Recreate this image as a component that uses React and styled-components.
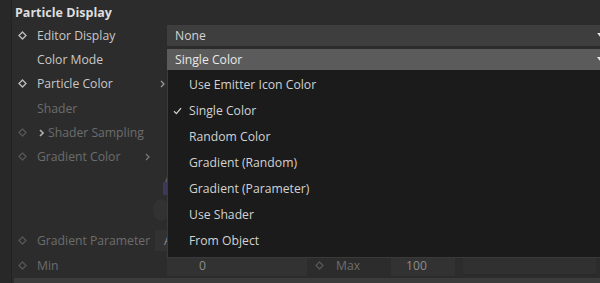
import React from "react";
import styled, { createGlobalStyle } from "styled-components";

const GlobalStyle = createGlobalStyle`
  html, body {
    margin: 0;
    padding: 0;
    background: #2c2c2c;
    overflow: hidden;
  }
  body {
    font-family: "Open Sans", "Noto Sans", sans-serif;
    font-size: 12.2px;
    -webkit-font-smoothing: antialiased;
  }
`;

const Page = styled.div`
  display: flex;
  width: 600px;
  height: 283px;
  overflow: hidden;
`;

const Gutter = styled.div`
  width: 11px;
  flex-shrink: 0;
  background: #282828;
  border-right: 1px solid #222222;
`;

const Panel = styled.div`
  flex: 1;
  display: flex;
  flex-direction: column;
  background: #2c2c2c;
  min-width: 0;
`;

const Heading = styled.div`
  height: 20px;
  padding: 3px 0 0 3px;
  line-height: 20px;
  font-size: 12.5px;
  font-weight: 700;
  color: #dedede;
`;

const Row = styled.div`
  height: 24.4px;
  display: grid;
  grid-template-columns: 20px 135px 1fr;
  align-items: center;
  position: relative;
  z-index: ${(p) => (p.$top ? 5 : "auto")};
`;

const KeyCell = styled.div`
  display: flex;
  justify-content: center;
  align-items: center;
`;

const Label = styled.div`
  display: flex;
  align-items: center;
  padding-left: 5px;
  color: ${(p) => (p.$dim ? "#6c6c6c" : "#c8c8c8")};
  white-space: nowrap;
`;

const Chevron = styled.span`
  margin-left: auto;
  margin-right: ${(p) => p.$right || 2}px;
  display: flex;
  color: ${(p) => p.$color || "#9a9a9a"};
`;

const LeadChevron = styled.span`
  display: flex;
  margin: 0 4px 0 2px;
  color: #b0b0b0;
`;

const Field = styled.div`
  position: relative;
  height: 21px;
  line-height: 21px;
  padding-left: 8px;
  background: ${(p) => (p.$active ? "#5b5b5b" : "#3e3e3e")};
  color: ${(p) => (p.$active ? "#e8e8e8" : "#d4d4d4")};
  white-space: nowrap;
`;

const FieldArrow = styled.span`
  position: absolute;
  right: 0;
  top: 8px;
  width: 3px;
  height: 4px;
  background: #e8e8e8;
  clip-path: polygon(0 0, 100% 0, 100% 100%);
`;

const GradientArea = styled.div`
  height: 59.6px;
  display: flex;
  padding-left: 141px;
`;

const GradientStack = styled.div`
  display: flex;
  flex-direction: column;
  align-items: flex-end;
  width: 16px;
`;

const Knot = styled.div`
  width: 0;
  height: 0;
  margin-top: 2px;
  border-left: 4px solid transparent;
  border-bottom: 11px solid #5a5a5a;
`;

const Swatch = styled.div`
  width: 6px;
  height: 13px;
  background: #3b3858;
`;

const Dial = styled.div`
  width: 16px;
  height: 22px;
  margin-top: 4px;
  border-radius: 50%;
  background: #323232;
`;

const ParamRow = styled.div`
  height: 24.4px;
  display: grid;
  grid-template-columns: 20px 135px 140px 24px 60px 1fr;
  align-items: center;
`;

const ValueBox = styled.div`
  height: 21px;
  line-height: 21px;
  background: #323232;
  color: #8c8c8c;
  padding-left: ${(p) => p.$pad || 8}px;
  margin-left: ${(p) => p.$offset || 0}px;
  white-space: nowrap;
`;

const MaxGroup = styled.div`
  display: grid;
  grid-template-columns: 64px 1fr;
  align-items: center;
`;

const Slider = styled.div`
  height: 21px;
  margin-left: 8px;
  margin-right: 4px;
  background: #303030;
  border-bottom: 2px solid #2a2a2a;
  box-sizing: border-box;
`;

const BottomBand = styled.div`
  height: 5px;
  margin-top: 0.6px;
  margin-left: 2px;
  background: #3b3b3b;
`;

const Menu = styled.div`
  position: absolute;
  left: 0;
  top: 100%;
  width: 440px;
  padding: 2px 0 3px;
  background: #1b1b1b;
  border-left: 1px solid #3a3a3a;
  border-bottom: 1px solid #3a3a3a;
`;

const MenuItem = styled.div`
  height: 26px;
  line-height: 26px;
  padding-left: 21px;
  position: relative;
  color: #d2d2d2;
  white-space: nowrap;
`;

const Check = styled.svg`
  position: absolute;
  left: 5px;
  top: 9px;
`;

const Diamond = ({ dim }) => (
  <svg width="9" height="9" viewBox="0 0 9 9">
    <path
      d="M4.5 1 L8 4.5 L4.5 8 L1 4.5 Z"
      fill="none"
      stroke={dim ? "#555555" : "#bdbdbd"}
      strokeWidth="1.3"
    />
  </svg>
);

const ChevronIcon = ({ width = 1.3 }) => (
  <svg width="5" height="8" viewBox="0 0 5 8">
    <path d="M1 1 L4 4 L1 7" fill="none" stroke="currentColor" strokeWidth={width} />
  </svg>
);

const modes = [
  "Use Emitter Icon Color",
  "Single Color",
  "Random Color",
  "Gradient (Random)",
  "Gradient (Parameter)",
  "Use Shader",
  "From Object",
];

export default function App() {
  return (
    <>
      <GlobalStyle />
      <Page>
        <Gutter />
        <Panel>
          <Heading>Particle Display</Heading>

          <Row>
            <KeyCell><Diamond /></KeyCell>
            <Label>Editor Display</Label>
            <Field>
              None
              <FieldArrow />
            </Field>
          </Row>

          <Row $top>
            <KeyCell />
            <Label>Color Mode</Label>
            <Field $active>
              Single Color
              <FieldArrow />
              <Menu>
                {modes.map((m) => (
                  <MenuItem key={m}>
                    {m === "Single Color" && (
                      <Check width="9" height="8" viewBox="0 0 9 8">
                        <path d="M1 4.2 L3.4 6.6 L8 1.2" fill="none" stroke="#d2d2d2" strokeWidth="1.3" />
                      </Check>
                    )}
                    {m}
                  </MenuItem>
                ))}
              </Menu>
            </Field>
          </Row>

          <Row>
            <KeyCell><Diamond /></KeyCell>
            <Label>
              Particle Color
              <Chevron $right={2}><ChevronIcon /></Chevron>
            </Label>
            <div />
          </Row>

          <Row>
            <KeyCell />
            <Label $dim>Shader</Label>
            <div />
          </Row>

          <Row>
            <KeyCell><Diamond dim /></KeyCell>
            <Label $dim>
              <LeadChevron><ChevronIcon width={1.6} /></LeadChevron>
              Shader Sampling
            </Label>
            <div />
          </Row>

          <Row>
            <KeyCell><Diamond dim /></KeyCell>
            <Label $dim>
              Gradient Color
              <Chevron $right={17} $color="#7a7a7a"><ChevronIcon /></Chevron>
            </Label>
            <div />
          </Row>

          <GradientArea>
            <GradientStack>
              <Knot />
              <Swatch />
              <Dial />
            </GradientStack>
          </GradientArea>

          <ParamRow>
            <KeyCell><Diamond dim /></KeyCell>
            <Label $dim>Gradient Parameter</Label>
            <ValueBox $offset={-12} $pad={9}>Age</ValueBox>
          </ParamRow>

          <ParamRow>
            <KeyCell><Diamond dim /></KeyCell>
            <Label $dim>Min</Label>
            <ValueBox $pad={32}>0</ValueBox>
            <KeyCell><Diamond dim /></KeyCell>
            <Label $dim>Max</Label>
            <MaxGroup>
              <ValueBox $pad={15}>100</ValueBox>
              <Slider />
            </MaxGroup>
          </ParamRow>

          <BottomBand />
        </Panel>
      </Page>
    </>
  );
}
